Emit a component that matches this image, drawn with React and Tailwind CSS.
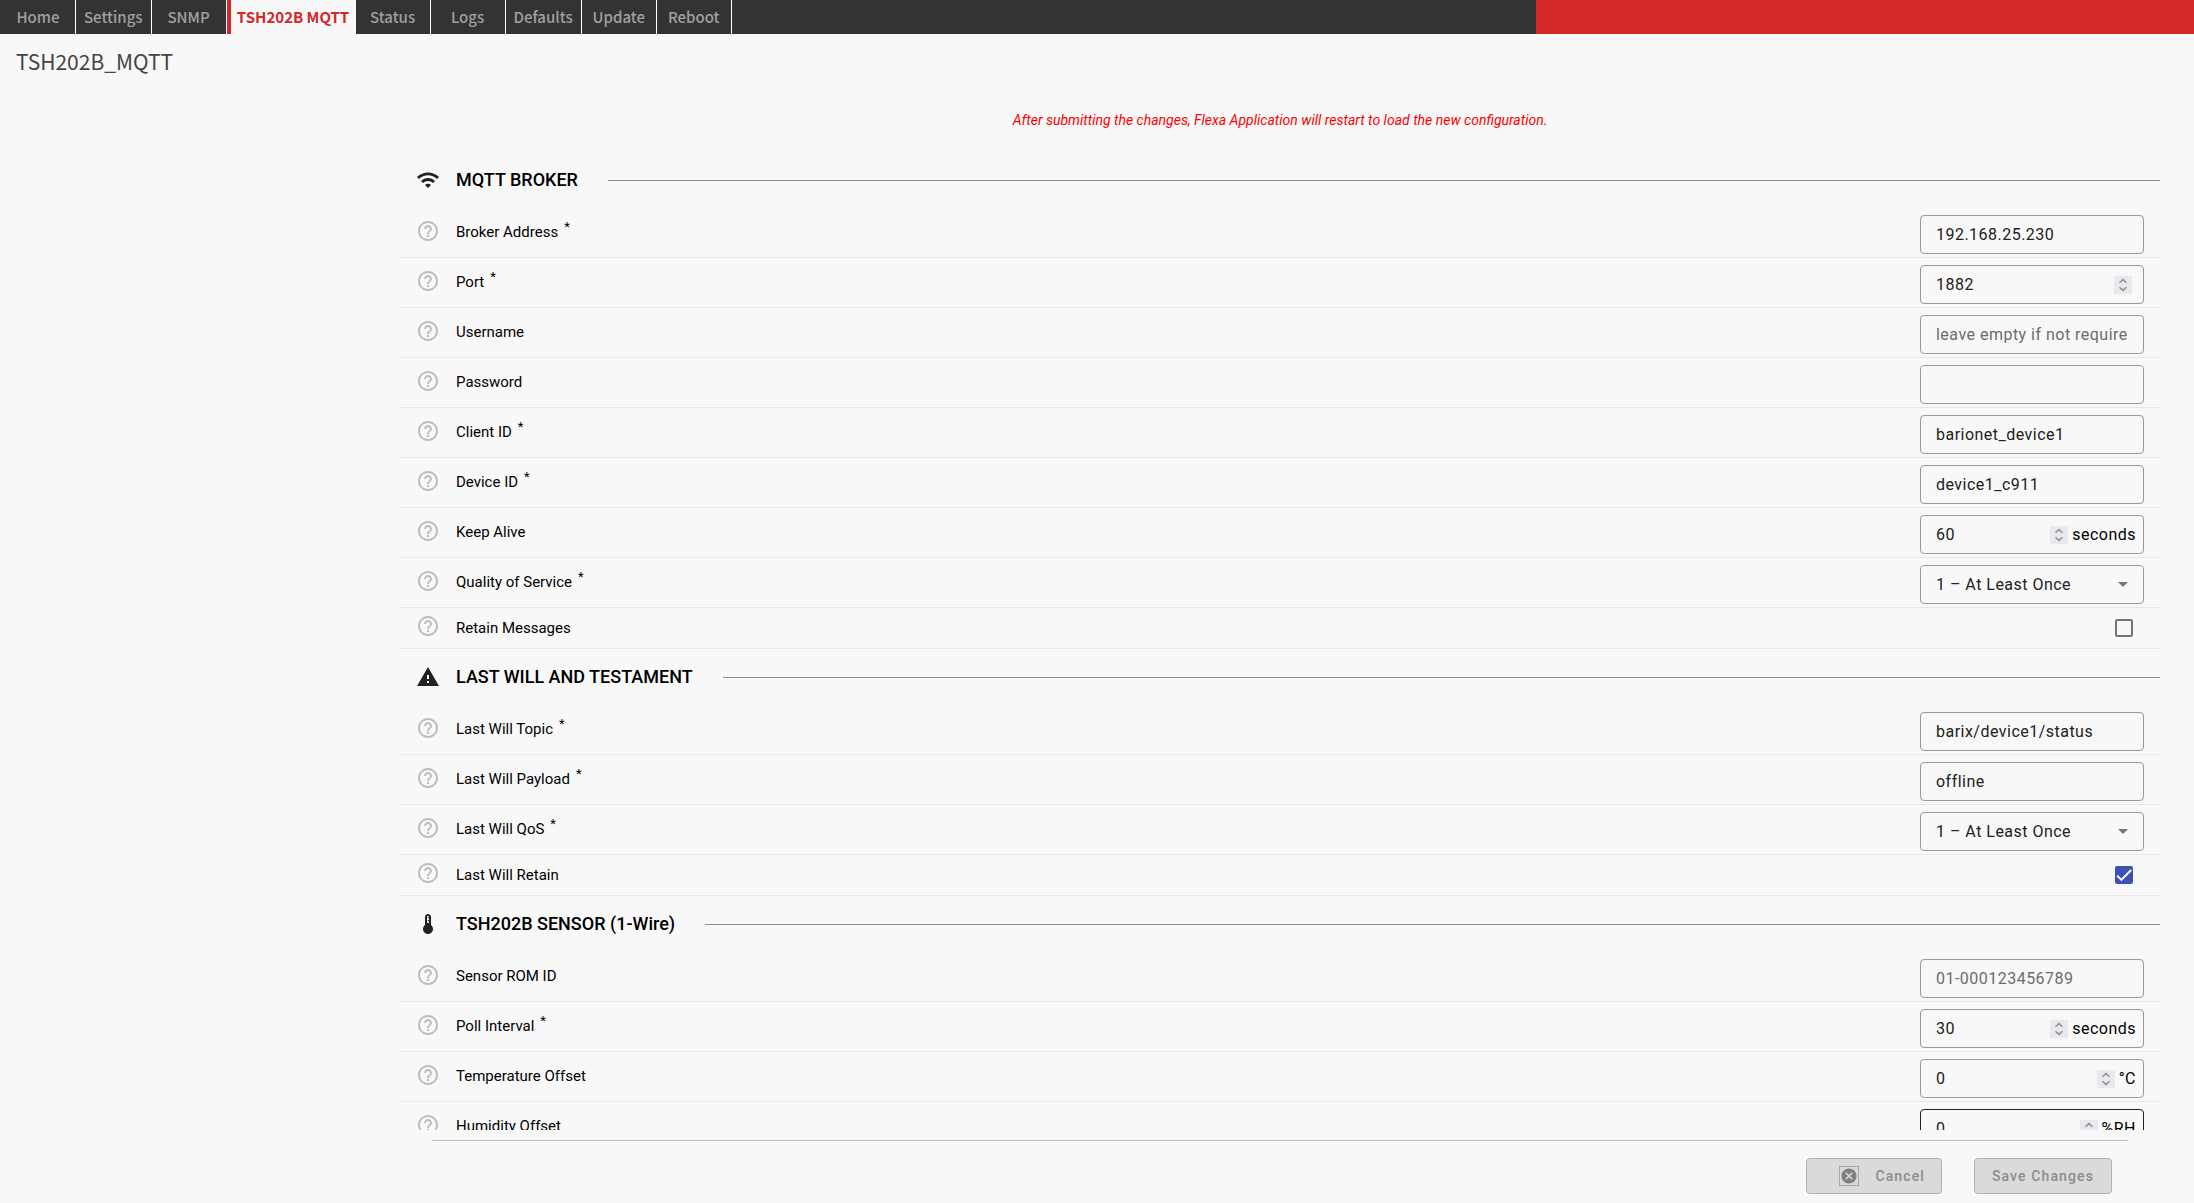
import { MdCancel, MdDeviceThermostat, MdHelpOutline, MdWarning, MdWifi } from 'react-icons/md';

const tabs = ['Home', 'Settings', 'SNMP', 'TSH202B MQTT', 'Status', 'Logs', 'Defaults', 'Update', 'Reboot'];
const activeTab = 'TSH202B MQTT';

const sections = [
  {
    title: 'MQTT BROKER',
    icon: MdWifi,
    fields: [
      { id: 'address', label: 'Broker Address', required: true, type: 'text', value: '192.168.25.230' },
      { id: 'port', label: 'Port', required: true, type: 'number', value: '1882' },
      { id: 'username', label: 'Username', type: 'text', placeholder: 'leave empty if not required' },
      { id: 'password', label: 'Password', type: 'password' },
      { id: 'client', label: 'Client ID', required: true, type: 'text', value: 'barionet_device1' },
      { id: 'device', label: 'Device ID', required: true, type: 'text', value: 'device1_c911' },
      { id: 'keepalive', label: 'Keep Alive', type: 'number', value: '60', unit: 'seconds' },
      { id: 'qos', label: 'Quality of Service', required: true, type: 'select' },
      { id: 'retain', label: 'Retain Messages', type: 'checkbox', checked: false },
    ],
  },
  {
    title: 'LAST WILL AND TESTAMENT',
    icon: MdWarning,
    fields: [
      { id: 'lwtopic', label: 'Last Will Topic', required: true, type: 'text', value: 'barix/device1/status' },
      { id: 'lwpayload', label: 'Last Will Payload', required: true, type: 'text', value: 'offline' },
      { id: 'lwqos', label: 'Last Will QoS', required: true, type: 'select' },
      { id: 'lwretain', label: 'Last Will Retain', type: 'checkbox', checked: true },
    ],
  },
  {
    title: 'TSH202B SENSOR (1-Wire)',
    icon: MdDeviceThermostat,
    fields: [
      { id: 'rom', label: 'Sensor ROM ID', type: 'text', placeholder: '01-000123456789' },
      { id: 'poll', label: 'Poll Interval', required: true, type: 'number', value: '30', unit: 'seconds' },
      { id: 'temp', label: 'Temperature Offset', type: 'number', value: '0', unit: '°C' },
      { id: 'humidity', label: 'Humidity Offset', type: 'number', value: '0', unit: '%RH', active: true },
    ],
  },
];

function Spinner() {
  return (
    <svg viewBox="0 0 18 18" className="size-[18px] shrink-0 bg-[#e9e9ed]" fill="none" stroke="#8f8f9d" strokeWidth="1.5">
      <path d="M5.5 6.8 9 3.6l3.5 3.2M5.5 11.2 9 14.4l3.5-3.2" />
    </svg>
  );
}

function Checkbox({ field }) {
  return (
    <div className="relative mr-[27px] size-[18px]">
      <input
        id={field.id}
        type="checkbox"
        defaultChecked={field.checked}
        className="peer block size-[18px] appearance-none rounded-xs border-2 border-[#757575] checked:border-[#3f51b5] checked:bg-[#3f51b5]"
      />
      <svg viewBox="0 0 24 24" className="pointer-events-none absolute inset-0 hidden size-[18px] p-px peer-checked:block" fill="none" stroke="white" strokeWidth="3">
        <path d="M1.73 12.91 8.1 19.28 22.79 4.59" />
      </svg>
    </div>
  );
}

function Control({ field }) {
  if (field.type === 'checkbox') return <Checkbox field={field} />;

  const border = field.active ? 'border-[#212121]' : 'border-[#999]';
  return (
    <div className={`relative mt-1 mr-4 flex h-[39px] w-56 items-center rounded border text-base tracking-[0.03em] text-[#212121] ${border}`}>
      {field.type === 'select' ? (
        <>
          <select id={field.id} defaultValue="1" className="h-full w-full appearance-none bg-transparent pl-[15px] tracking-[0.03em] outline-none">
            <option value="0">0 – At Most Once</option>
            <option value="1">1 – At Least Once</option>
            <option value="2">2 – Exactly Once</option>
          </select>
          <svg viewBox="0 0 10 5" className="pointer-events-none absolute right-[15px] h-[5px] w-[10px]">
            <path d="M0 0h10L5 5z" fill="#757575" />
          </svg>
        </>
      ) : (
        <input
          id={field.id}
          type={field.type}
          defaultValue={field.value}
          placeholder={field.placeholder}
          className="ml-[15px] h-full min-w-0 flex-1 bg-transparent tracking-[0.03em] outline-none [appearance:textfield] placeholder:text-[#6b6b6b] [&::-webkit-inner-spin-button]:appearance-none"
        />
      )}
      {field.type === 'number' && <Spinner />}
      {field.unit && <span className="mr-[7px] ml-1 text-black">{field.unit}</span>}
      {!field.unit && field.type === 'number' && <span className="w-[11px]" />}
      {(field.type === 'text' || field.type === 'password') && <span className="w-[15px]" />}
    </div>
  );
}

function Row({ field }) {
  return (
    <div className={`flex items-center border-b border-[#e8e8e8] ${field.type === 'checkbox' ? 'h-[41px]' : 'h-[50px]'}`}>
      <MdHelpOutline className="mb-1 ml-4 size-6 text-[#bdbdbd]" />
      <label htmlFor={field.id} className="ml-4 flex-1 text-[15px] text-black">
        {field.label}
        {field.required && <sup className="ml-1.5 text-[13px]">*</sup>}
      </label>
      <Control field={field} />
    </div>
  );
}

export default function App() {
  return (
    <div className="flex h-screen flex-col overflow-hidden bg-[#f8f8f8] font-['Roboto',sans-serif]">
      <header className="flex h-[34px] shrink-0 bg-[#333] font-['Noto_Sans_CJK_SC',sans-serif] text-[15px]">
        <nav className="flex w-[70%] pl-px">
          {tabs.map((tab) =>
            tab === activeTab ? (
              <a key={tab} href="#" className="flex min-w-[129px] items-center justify-center border-l-4 border-[#d32828] bg-[#f8f8f8] font-bold text-[#d32828]">
                {tab}
              </a>
            ) : (
              <a key={tab} href="#" className="flex min-w-[75px] items-center justify-center border-r border-white px-2 font-medium text-[#a0a0a0]">
                {tab}
              </a>
            )
          )}
        </nav>
        <div className="flex-1 bg-[#d32828]" />
      </header>

      <h1 className="ml-4 h-[58px] shrink-0 pt-[11px] font-['Noto_Sans_CJK_SC',sans-serif] text-[21px] leading-8 text-[#444]">TSH202B_MQTT</h1>

      <div className="flex min-h-0 flex-1">
        <aside className="w-100 shrink-0" />
        <form className="mr-[34px] flex flex-1 flex-col">
          <div className="min-h-0 flex-1 overflow-hidden">
            <p className="mb-5 pt-4 text-center text-sm leading-6 text-[#ff0000] italic">
              After submitting the changes, Flexa Application will restart to load the new configuration.
            </p>
            {sections.map((section) => (
              <section key={section.title}>
                <div className="flex h-14 items-center">
                  <section.icon className="ml-4 size-6 text-[#212121]" />
                  <h2 className="ml-4 text-lg font-medium text-black">{section.title}</h2>
                  <hr className="ml-[30px] flex-1 border-[#8f8f8f]" />
                </div>
                {section.fields.map((field) => (
                  <Row key={field.id} field={field} />
                ))}
              </section>
            ))}
          </div>

          <footer className="mx-8 mt-[10px] flex shrink-0 justify-end gap-8 border-t border-[#c4c4c4] pt-[17px] pr-4 pb-[9px]">
            <button type="button" disabled className="flex h-9 w-[136px] items-center justify-end gap-4 rounded border border-[#b0b0b0] bg-[#dadada] pr-4 text-sm font-medium tracking-[0.08em] text-[#8c8c8c]">
              <span className="border border-[#a8a8a8] text-[#808080]">
                <MdCancel className="size-[18px]" />
              </span>
              Cancel
            </button>
            <button type="submit" disabled className="h-9 w-[138px] rounded border border-[#b0b0b0] bg-[#dadada] text-sm font-medium tracking-[0.08em] text-[#8c8c8c]">
              Save Changes
            </button>
          </footer>
        </form>
      </div>
    </div>
  );
}
